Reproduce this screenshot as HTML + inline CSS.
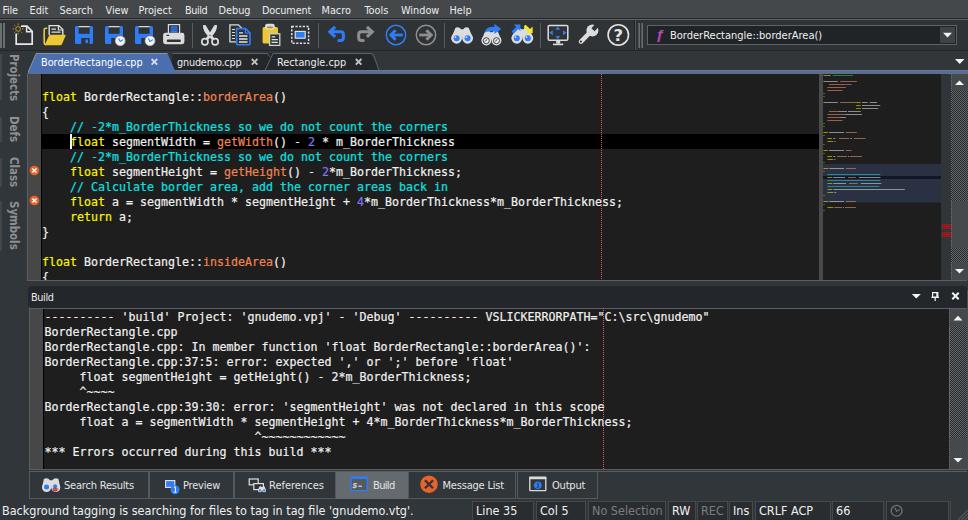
<!DOCTYPE html>
<html lang="en">
<head>
<meta charset="utf-8">
<title>SlickEdit - BorderRectangle.cpp</title>
<style>
*{box-sizing:border-box;margin:0;padding:0}
html,body{width:968px;height:520px;overflow:hidden;background:#31363a}
body{position:relative;font-family:"DejaVu Sans Condensed","DejaVu Sans","Liberation Sans",sans-serif;font-stretch:condensed;font-size:11px;color:#e8e8e8}
.abs{position:absolute}
#menubar{left:0;top:0;width:968px;height:18px;background:#44484b}
#menubar span{position:absolute;top:4px;line-height:14px;font-size:10.8px;margin-left:-0.5px;color:#ececec;white-space:nowrap}
#menuline{left:0;top:18px;width:968px;height:2px;background:#5c6266;border-top:1px solid #242628}
#toolbar{left:0;top:20px;width:968px;height:31px;background:#2f3336}
#tbline{left:0;top:50px;width:968px;height:1px;background:#232527}
.sep{position:absolute;top:3px;width:1px;height:25px;background:#5a5d60}
.grip{position:absolute;top:3px;width:2px;height:25px;background:#6a6d70}
.ico{position:absolute;top:0;left:0;overflow:visible}
#tabrow{left:0;top:51px;width:968px;height:19px;background:#31363a}
#sidebar{left:0;top:51px;width:28px;height:236px;background:#31363a}
.vt{position:absolute;left:7px;width:14px;writing-mode:vertical-rl;font-weight:bold;font-size:11.4px;color:#8e9092;white-space:nowrap;line-height:14px}
.tabt{font-size:10.8px;line-height:14px;color:#ececec;white-space:nowrap}
.vseg{position:absolute;left:0;width:2px;background:#42464a}
pre,.mono{font-family:"DejaVu Sans Mono","Liberation Mono",monospace;font-size:11.63px;line-height:15px;white-space:pre;-webkit-text-stroke:0.2px;font-stretch:normal}
#editor{left:28px;top:74px;width:792px;height:206px;background:#1e1e1e;overflow:hidden}
#code{position:absolute;left:14px;top:1px;color:#f0f0f0}
.k{color:#fbf400}.f{color:#ee8452}.c{color:#08e2e2}.n{color:#8272ee}
#build{left:30px;top:308.5px;width:919px;height:160.5px;background:#1e1e1e;overflow:hidden}
#bout{position:absolute;left:14.5px;top:1.5px;color:#f0f0f0}
.btab{position:absolute;top:472px;height:26.5px;border:1px solid #55595c;border-top:none;font-size:11px;line-height:26px;color:#e4e4e4;white-space:nowrap;letter-spacing:-0.2px}
.btab b{font-weight:normal;position:absolute;top:1px}
.cell{position:absolute;top:501px;height:19px;background:#2a2d30;border:1px solid #46494c;border-bottom:none;font-size:12.5px;line-height:18px;color:#f0f0f0;padding-left:3px;white-space:nowrap}
.dim{color:#7a7d80}
.chk{background:repeating-conic-gradient(#272a2c 0% 25%,#63686b 0% 50%) 0 0/2px 2px}
</style>
</head>
<body>
<!-- MENU -->
<div id="menubar" class="abs">
<span style="left:3px;letter-spacing:-0.2px">File</span><span style="left:30px">Edit</span><span style="left:60px">Search</span><span style="left:106px">View</span><span style="left:139px">Project</span><span style="left:185.5px;letter-spacing:-0.4px">Build</span><span style="left:219px">Debug</span><span style="left:262.5px;letter-spacing:-0.15px">Document</span><span style="left:322px">Macro</span><span style="left:365px">Tools</span><span style="left:401.5px">Window</span><span style="left:450px">Help</span>
</div>
<div id="menuline" class="abs"></div>
<!-- TOOLBAR -->
<div id="toolbar" class="abs">
<div class="grip" style="left:0"></div><div class="grip" style="left:3px"></div>
<div class="sep" style="left:192px"></div><div class="sep" style="left:318px"></div><div class="sep" style="left:444px"></div><div class="sep" style="left:540px"></div>
<svg class="ico" width="968" height="31" viewBox="0 20 968 31">

<!-- new file -->
<path d="M21,26.2 H27 L32.2,31.4 V44.2 H16.2 V33.5" fill="none" stroke="#e6e6e6" stroke-width="1.7" stroke-linejoin="miter"/>
<path d="M26.6,26.2 V31.8 H32.2" fill="none" stroke="#e6e6e6" stroke-width="1.5"/>
<g stroke="#c9a227" stroke-width="0.9" fill="none"><circle cx="18.1" cy="28.9" r="2.4"/><path d="M22.00,28.90 L23.60,28.90 M20.86,31.66 L21.99,32.79 M18.10,32.80 L18.10,34.40 M15.34,31.66 L14.21,32.79 M14.20,28.90 L12.60,28.90 M15.34,26.14 L14.21,25.01 M18.10,25.00 L18.10,23.40 M20.86,26.14 L21.99,25.01"/></g>
<!-- open folder -->
<path d="M49.2,35 V25.6 H58.8 L62.8,29.6 V35" fill="none" stroke="#e0e0e0" stroke-width="1.4"/>
<path d="M58.4,25.6 V30 H62.8" fill="none" stroke="#e0e0e0" stroke-width="1.2"/>
<path d="M51.5,29.2 h4.5 M51.5,32.2 h9" stroke="#e0e0e0" stroke-width="1.3"/>
<path d="M47.2,28.2 H45.8 Q44.2,28.2 44.2,29.8 V43 Q44.2,44.6 45.8,44.6" fill="none" stroke="#eec832" stroke-width="1.6"/>
<path d="M50.6,34.8 H64.8 Q66,34.8 65.5,36 L62,44 Q61.5,45.3 60.2,45.3 H45.5 Q44.5,45.3 45,44.2 L48.8,36 Q49.4,34.8 50.6,34.8 Z" fill="#eec832"/>
<!-- save -->
<g transform="translate(75,26)"><path d="M1.5,0 H16.5 Q18,0 18,1.5 V16.5 Q18,18 16.5,18 H1.5 Q0,18 0,16.5 V1.5 Q0,0 1.5,0 Z" fill="#2f7df6"/><rect x="3.6" y="0" width="11" height="7.8" fill="#2f3336"/><rect x="3.6" y="0" width="11" height="1.3" fill="#d6d6d6"/><rect x="6.2" y="12" width="8.4" height="6" fill="#2f3336"/><rect x="10.4" y="13.5" width="2.6" height="3.6" fill="#2f7df6"/></g>
<g transform="translate(105,26)"><path d="M1.5,0 H16.5 Q18,0 18,1.5 V16.5 Q18,18 16.5,18 H1.5 Q0,18 0,16.5 V1.5 Q0,0 1.5,0 Z" fill="#2f7df6"/><rect x="3.6" y="0" width="11" height="7.8" fill="#2f3336"/><rect x="3.6" y="0" width="11" height="1.3" fill="#d6d6d6"/><rect x="6.2" y="12" width="8.4" height="6" fill="#2f3336"/><rect x="10.4" y="13.5" width="2.6" height="3.6" fill="#2f7df6"/></g><g transform="translate(120.2,40.8)"><circle cx="0" cy="0" r="5.6" fill="#2f3336"/><circle cx="0" cy="0" r="4.9" fill="#f4f4f4" stroke="#b8b8b8" stroke-width="0.8"/><path d="M-1.6,-2.2 L0,0.6 L3,-1.2" fill="none" stroke="#2f7df6" stroke-width="1.1"/></g>
<g transform="translate(135,26)"><path d="M1.5,0 H16.5 Q18,0 18,1.5 V16.5 Q18,18 16.5,18 H1.5 Q0,18 0,16.5 V1.5 Q0,0 1.5,0 Z" fill="#2f7df6"/><rect x="3.6" y="0" width="11" height="7.8" fill="#2f3336"/><rect x="3.6" y="0" width="11" height="1.3" fill="#d6d6d6"/><rect x="6.2" y="12" width="8.4" height="6" fill="#2f3336"/><rect x="10.4" y="13.5" width="2.6" height="3.6" fill="#2f7df6"/></g><g transform="translate(150,40.8)"><circle cx="0" cy="0" r="5.6" fill="#2f3336"/><circle cx="0" cy="0" r="4.9" fill="#f4f4f4" stroke="#b8b8b8" stroke-width="0.8"/><path d="M-1.6,-2.2 L0,0.6 L3,-1.2" fill="none" stroke="#2f7df6" stroke-width="1.1"/></g>
<!-- printer -->
<rect x="168.4" y="24.6" width="11.2" height="9" fill="#2f3336" stroke="#dcdcdc" stroke-width="1.2"/>
<rect x="170.6" y="26.4" width="6.8" height="6" fill="#2f7df6"/>
<path d="M170.6,28.2 h6.8 M170.6,30.2 h6.8" stroke="#2f3336" stroke-width="0.6"/>
<path d="M165.5,32.8 H182 Q184.4,32.8 184.4,35.2 V41.8 Q184.4,44.2 182,44.2 H165.5 Q163.1,44.2 163.1,41.8 V35.2 Q163.1,32.8 165.5,32.8 Z" fill="#dcdcdc"/>
<rect x="166.8" y="39.6" width="14" height="2.4" rx="0.8" fill="#2f3336"/>
<rect x="166.5" y="34.8" width="2.6" height="1.2" fill="#2f3336"/>
<!-- scissors -->
<g fill="none" stroke="#dcdcdc">
<circle cx="204.9" cy="41.7" r="3.1" stroke-width="1.7"/>
<circle cx="215.1" cy="41.7" r="3.1" stroke-width="1.7"/>
</g>
<path d="M202.9,25.2 L205.5,25 Q208.8,30.4 211.2,34.2 L214.6,38.8 L212.6,40.2 L207.8,36 Q202.9,30.8 202.9,25.2 Z" fill="#dcdcdc"/>
<path d="M217.1,25.2 L214.5,25 Q211.2,30.4 208.8,34.2 L205.4,38.8 L207.4,40.2 L212.2,36 Q217.1,30.8 217.1,25.2 Z" fill="#dcdcdc"/>
<circle cx="210" cy="35.4" r="0.6" fill="#2f3336"/>
<!-- copy -->
<path d="M229.9,24.9 H238.4 L241.6,28 V41.8 H229.9 Z" fill="none" stroke="#dcdcdc" stroke-width="1.3"/>
<path d="M232,29.5 h3 M232,32.5 h3 M232,35.5 h3 M232,38.5 h3" stroke="#dcdcdc" stroke-width="1.2"/>
<path d="M236.6,28.6 H245.6 L250,33 V43.6 Q250,44.8 248.8,44.8 H237.8 Q236.6,44.8 236.6,43.6 Z" fill="#2f3336" stroke="#2f7df6" stroke-width="1.6"/>
<path d="M245.4,28.6 V33.2 H250" fill="none" stroke="#2f7df6" stroke-width="1.3"/>
<path d="M239,32.8 h4 M239,36 h8.5 M239,39 h8.5 M239,42 h8.5" stroke="#e6e6e6" stroke-width="1.3"/>
<!-- paste -->
<rect x="262.6" y="27" width="15.4" height="16.6" rx="1.6" fill="#eec832"/>
<rect x="265" y="23.8" width="9.8" height="5.6" rx="2.4" fill="#dcdcdc"/>
<rect x="267" y="26.4" width="5.8" height="1.8" rx="0.6" fill="#a08a3a"/>
<rect x="269.6" y="33.8" width="10.2" height="11.6" fill="#2f3336" stroke="#d0d0d0" stroke-width="1.3"/>
<path d="M271.6,36.8 h3.6 M271.6,39.6 h6.2 M271.6,42.4 h6.2" stroke="#e6e6e6" stroke-width="1.3"/>
<!-- select -->
<rect x="291.8" y="26.4" width="16.8" height="16.8" fill="none" stroke="#e0e0e0" stroke-width="1.5" stroke-dasharray="2.2,1.45"/>
<rect x="295.2" y="31.4" width="10" height="6.8" fill="#2f7df6" stroke="#e6e6e6" stroke-width="1.1"/>
<!-- undo -->
<path d="M335.2,26.8 L329.8,31.8 L335.2,36.8" fill="none" stroke="#2f7df6" stroke-width="3.1" stroke-linejoin="miter"/>
<path d="M331,31.8 H340.6 Q343.4,31.8 343.4,34.6 V37.8 Q343.4,40.6 340.6,40.6 H338.8" fill="none" stroke="#2f7df6" stroke-width="3" stroke-linecap="round"/>
<!-- redo -->
<path d="M366.9,26.8 L372.3,31.8 L366.9,36.8" fill="none" stroke="#8e8e8e" stroke-width="3.1" stroke-linejoin="miter"/>
<path d="M371.1,31.8 H361.5 Q358.7,31.8 358.7,34.6 V37.8 Q358.7,40.6 361.5,40.6 H363.3" fill="none" stroke="#8e8e8e" stroke-width="3" stroke-linecap="round"/>
<!-- back -->
<circle cx="396" cy="35" r="9.7" fill="none" stroke="#2f7df6" stroke-width="1.5"/>
<path d="M395.6,30.2 L390.8,35 L395.6,39.8" fill="none" stroke="#2f7df6" stroke-width="3" stroke-linejoin="miter"/><rect x="392" y="33.6" width="10.8" height="2.8" fill="#2f7df6"/>
<!-- forward -->
<circle cx="426" cy="35" r="9.7" fill="none" stroke="#8e8e8e" stroke-width="1.5"/>
<path d="M426.4,30.2 L431.2,35 L426.4,39.8" fill="none" stroke="#8e8e8e" stroke-width="3" stroke-linejoin="miter"/><rect x="419.2" y="33.6" width="10.8" height="2.8" fill="#8e8e8e"/>
<!-- binoculars 1 -->
<g transform="translate(451.2,27)"><path d="M4.2,0.9 Q6.2,-0.4 8.4,0.8 L9.8,2.2 H12 L13.4,0.8 Q15.6,-0.4 17.6,0.9 L21.5,10.5 H0.3 Z" fill="#dcdcdc"/><circle cx="5.4" cy="11.3" r="5.4" fill="#dcdcdc"/><circle cx="16.4" cy="11.3" r="5.4" fill="#dcdcdc"/></g>
<circle cx="456.6" cy="38.3" r="3" fill="#2f7df6"/><circle cx="467.6" cy="38.3" r="3" fill="#2f7df6"/>
<circle cx="455.4" cy="37.2" r="0.9" fill="#dcdcdc"/><circle cx="466.4" cy="37.2" r="0.9" fill="#dcdcdc"/>
<!-- binoculars 2 -->
<g transform="translate(481.4,30.2) scale(0.92)"><path d="M4.2,0.9 Q6.2,-0.4 8.4,0.8 L9.8,2.2 H12 L13.4,0.8 Q15.6,-0.4 17.6,0.9 L21.5,10.5 H0.3 Z" fill="#dcdcdc"/><circle cx="5.4" cy="11.3" r="5.4" fill="#dcdcdc"/><circle cx="16.4" cy="11.3" r="5.4" fill="#dcdcdc"/></g>
<circle cx="486.3" cy="40.7" r="3" fill="#f0f0f0" stroke="#3a3d40" stroke-width="1"/><circle cx="496.5" cy="40.7" r="3" fill="#f0f0f0" stroke="#3a3d40" stroke-width="1"/>
<path d="M486.3,40.7 l-1.6,0.4 M486.3,40.7 l0.6,-1.6 M496.5,40.7 l-1.6,0.4 M496.5,40.7 l0.6,-1.6" stroke="#3a3d40" stroke-width="0.8"/>
<path d="M484.8,32.6 Q485.6,26.8 493.4,26.8 H494.4 V23.8 L501.2,28.9 L494.4,34 V31.2 H493.4 Q488.2,31 484.8,32.6 Z" fill="#2f7df6"/>
<!-- binoculars 3 -->
<g transform="translate(511.4,27)"><path d="M4.2,0.9 Q6.2,-0.4 8.4,0.8 L9.8,2.2 H12 L13.4,0.8 Q15.6,-0.4 17.6,0.9 L21.5,10.5 H0.3 Z" fill="#dcdcdc"/><circle cx="5.4" cy="11.3" r="5.4" fill="#dcdcdc"/><circle cx="16.4" cy="11.3" r="5.4" fill="#dcdcdc"/></g>
<circle cx="516.8" cy="38.3" r="3" fill="#2f7df6"/><circle cx="527.8" cy="38.3" r="3" fill="#2f7df6"/>
<circle cx="515.6" cy="37.2" r="0.9" fill="#dcdcdc"/><circle cx="526.6" cy="37.2" r="0.9" fill="#dcdcdc"/>
<path d="M512.6,32.6 L518,27.2" stroke="#2f7df6" stroke-width="3"/><path d="M513.8,24.6 H520.4 V31.2 Z" fill="#2f7df6"/>
<path d="M524.6,25.8 L530,31.2" stroke="#f4ec22" stroke-width="3"/><path d="M532.6,26.6 V33.2 H526 Z" fill="#f4ec22"/>
<!-- monitor -->
<rect x="548.2" y="25.4" width="19.6" height="14.8" rx="1.2" fill="none" stroke="#dcdcdc" stroke-width="1.5"/>
<rect x="556.2" y="40.8" width="4" height="2.8" fill="#dcdcdc"/>
<rect x="553" y="43.6" width="10.2" height="1.6" fill="#dcdcdc"/>
<path d="M557.8,26.4 l2.4,3.3 h-4.8 z M557.8,39.2 l2.4,-3.3 h-4.8 z M549.2,32.7 l3.6,-2.5 v5 z M566.6,32.7 l-3.6,-2.5 v5 z" fill="#2f7df6"/>
<!-- wrench -->
<path d="M581,41.6 L590.4,32" stroke="#dcdcdc" stroke-width="4.6" stroke-linecap="round"/>
<circle cx="592.4" cy="30.4" r="6" fill="#dcdcdc"/>
<path d="M593,29.8 L599.4,22.8" stroke="#2f3336" stroke-width="4.4"/>
<circle cx="580.9" cy="41.6" r="1.1" fill="#2f3336"/>
<!-- help -->
<circle cx="618.3" cy="34.9" r="10.2" fill="none" stroke="#e4e4e4" stroke-width="1.6"/>
<text x="618.3" y="41.4" text-anchor="middle" font-family="DejaVu Sans,Liberation Sans,sans-serif" font-stretch="normal" style="font-stretch:normal" font-weight="bold" font-size="16.5" fill="#e4e4e4">?</text>
<!-- toolbar 2 -->
<rect x="634" y="20" width="1" height="31" fill="#232527"/>
<rect x="635" y="20" width="1" height="31" fill="#50545a"/>
<rect x="638.4" y="23" width="1.6" height="25" fill="#6a6d70"/><rect x="641.4" y="23" width="1.6" height="25" fill="#6a6d70"/>
<rect x="647.5" y="25.5" width="309" height="19" fill="#212427" stroke="#5c6266" stroke-width="1"/>
<rect x="940" y="27" width="15" height="16" fill="#3f4346"/>
<path d="M943,32.8 h9 l-4.5,4.6 z" fill="#f4f4f4"/>
<text transform="translate(655.6,38.5) scale(1.3,1)" font-family="Liberation Sans,sans-serif" font-style="italic" font-weight="bold" font-size="12" fill="#b548b8">ƒ</text>
<text x="670" y="38.6" font-family="DejaVu Sans Condensed,DejaVu Sans,Liberation Sans,sans-serif" font-size="11" fill="#f0f0f0">BorderRectangle::borderArea()</text>
</svg>

</div>
<div id="tbline" class="abs"></div>
<!-- TAB ROW -->
<div id="tabrow" class="abs"></div>
<svg class="abs" style="left:0;top:0" width="968" height="80" viewBox="0 0 968 80">
<!-- inactive tabs -->
<path d="M170.5,70.5 L173,53.5 H371 L379,70.5 Z" fill="#24272a"/>
<path d="M172.5,53.5 H267.5 L269.8,56.8 M265,70.5 L273,53.5 H371 Q373,53.5 374,56 L379,70.5" fill="none" stroke="#5e6266" stroke-width="1"/>
<!-- line under tabs -->
<rect x="28" y="70" width="940" height="1" fill="#74787c"/>
<rect x="28" y="71" width="940" height="2.2" fill="#4b6eaf"/>
<rect x="28" y="73" width="940" height="1" fill="#6a6c6e"/>
<!-- active tab -->
<path d="M27.5,73.2 L36.2,53.5 H167.5 L175.2,71 V73.2 Z" fill="#4b6eaf"/>
<path d="M27.8,73 L36.2,53.5 H167.5" fill="none" stroke="#8a93a3" stroke-width="1"/>
<!-- close x -->
<g stroke-width="1.8" fill="none">
<path d="M151.6,59 l5.6,5.6 m0,-5.6 l-5.6,5.6" stroke="#d5dbe8"/>
<path d="M251.8,59 l5.6,5.6 m0,-5.6 l-5.6,5.6" stroke="#c4c4c4"/>
<path d="M355.8,59 l5.6,5.6 m0,-5.6 l-5.6,5.6" stroke="#c4c4c4"/>
</g>
<!-- dropdown triangle -->
<path d="M955,59 h9.5 l-4.75,5 z" fill="#f4f4f4"/>
</svg>
<div class="abs tabt" style="left:41px;top:56px;color:#fff">BorderRectangle.cpp</div>
<div class="abs tabt" style="left:177px;top:56px;letter-spacing:-0.2px">gnudemo.cpp</div>
<div class="abs tabt" style="left:277px;top:56px">Rectangle.cpp</div>

<!-- SIDEBAR -->
<div id="sidebar" class="abs">
<div class="vseg" style="top:3px;height:46px"></div><div class="vseg" style="top:66px;height:25px"></div><div class="vseg" style="top:107px;height:29px"></div><div class="vseg" style="top:150px;height:50px"></div>
<div class="vt" style="top:3px">Projects</div>
<div class="vt" style="top:65px">Defs</div>
<div class="vt" style="top:106px">Class</div>
<div class="vt" style="top:150px">Symbols</div>
</div>
<!-- EDITOR -->
<div id="editor" class="abs">
<div class="abs" style="left:0;top:0;width:13px;height:206px;background:#474747"></div>
<div class="abs" style="left:13px;top:0;width:1px;height:206px;background:#000"></div>
<div class="abs" style="left:13px;top:60px;width:779px;height:15px;background:#000"></div>
<div class="abs" style="left:42px;top:60px;width:2px;height:15px;background:#f4f4f4"></div>
<svg class="abs" style="left:0;top:90px" width="14" height="45" viewBox="0 0 14 45"><circle cx="6.4" cy="6.5" r="4.8" fill="#e8632c"/><path d="M4.3,4.4 l4.2,4.2 m0,-4.2 l-4.2,4.2" stroke="#fff" stroke-width="1.4"/><circle cx="6.4" cy="36.5" r="4.8" fill="#e8632c"/><path d="M4.3,34.4 l4.2,4.2 m0,-4.2 l-4.2,4.2" stroke="#fff" stroke-width="1.4"/></svg>
<pre id="code">

<span class="k">float</span> BorderRectangle::<span class="f">borderArea</span>()
{
    <span class="c">// -2*m_BorderThickness so we do not count the corners</span>
    <span class="k">float</span> segmentWidth = <span class="f">getWidth</span>() - <span class="n">2</span> * m_BorderThickness
    <span class="c">// -2*m_BorderThickness so we do not count the corners</span>
    <span class="k">float</span> segmentHeight = <span class="f">getHeight</span>() - <span class="n">2</span>*m_BorderThickness;
    <span class="c">// Calculate border area, add the corner areas back in</span>
    <span class="k">float</span> a = segmentWidth * segmentHeight + <span class="n">4</span>*m_BorderThickness*m_BorderThickness;
    <span class="k">return</span> a;
}

<span class="k">float</span> BorderRectangle::<span class="f">insideArea</span>()
{</pre>
</div>
<div class="abs chk" style="left:951px;top:74px;width:17px;height:206px"></div>
<svg class="abs" style="left:0;top:0" width="968" height="290" viewBox="0 0 968 290">
<!-- red margin line -->
<path d="M601.5,74 V280" stroke="#d46060" stroke-width="1" stroke-dasharray="1,1"/>
<!-- minimap -->
<rect x="819" y="74" width="4" height="206" fill="#4a4a4a"/>
<rect x="823" y="74" width="118" height="206" fill="#1e1e1e"/>
<rect x="823" y="164" width="118" height="38.5" fill="#2a3142"/>
<rect x="823" y="176" width="118" height="3" fill="#121726"/>
<g opacity="0.65">
<rect x="823.5" y="75.0" width="7.3" height="1" fill="#d0d000"/>
<rect x="832.7" y="75.0" width="20.2" height="1" fill="#20c030"/>
<rect x="823.5" y="81.0" width="14.3" height="1" fill="#c8c8c8"/>
<rect x="840.2" y="81.0" width="16.7" height="1" fill="#d8875a"/>
<rect x="829.0" y="84.0" width="15.7" height="1" fill="#d8875a"/>
<rect x="844.7" y="84.0" width="7.0" height="1" fill="#9a80d0"/>
<rect x="827.4" y="87.0" width="18.4" height="1" fill="#d8875a"/>
<rect x="827.4" y="90.0" width="15.0" height="1" fill="#d8875a"/>
<rect x="823.5" y="93.0" width="1.0" height="1" fill="#d0d000"/>
<rect x="823.5" y="96.0" width="1.0" height="1" fill="#d0d000"/>
<rect x="823.5" y="102.0" width="14.3" height="1" fill="#c8c8c8"/>
<rect x="840.2" y="102.0" width="16.1" height="1" fill="#d8875a"/>
<rect x="856.2" y="102.0" width="4.5" height="1" fill="#d0d000"/>
<rect x="862.0" y="102.0" width="5.6" height="1" fill="#c8c8c8"/>
<rect x="869.6" y="102.0" width="7.4" height="1" fill="#c8c8c8"/>
<rect x="856.2" y="105.0" width="4.5" height="1" fill="#d0d000"/>
<rect x="862.0" y="105.0" width="18.3" height="1" fill="#c8c8c8"/>
<rect x="856.2" y="108.0" width="4.5" height="1" fill="#d0d000"/>
<rect x="862.0" y="108.0" width="16.2" height="1" fill="#c8c8c8"/>
<rect x="829.0" y="111.0" width="10.0" height="1" fill="#d8875a"/>
<rect x="839.0" y="111.0" width="8.0" height="1" fill="#c8c8c8"/>
<rect x="848.0" y="111.0" width="12.7" height="1" fill="#c8c8c8"/>
<rect x="827.4" y="114.0" width="17.2" height="1" fill="#d8875a"/>
<rect x="844.7" y="114.0" width="17.3" height="1" fill="#c8c8c8"/>
<rect x="827.4" y="117.0" width="12.7" height="1" fill="#d8875a"/>
<rect x="840.2" y="117.0" width="5.7" height="1" fill="#c8c8c8"/>
<rect x="827.4" y="120.0" width="15.0" height="1" fill="#d8875a"/>
<rect x="823.5" y="123.0" width="1.0" height="1" fill="#d0d000"/>
<rect x="823.5" y="126.0" width="1.0" height="1" fill="#d0d000"/>
<rect x="823.5" y="132.0" width="4.4" height="1" fill="#d0d000"/>
<rect x="829.0" y="132.0" width="15.1" height="1" fill="#c8c8c8"/>
<rect x="845.8" y="132.0" width="11.0" height="1" fill="#d8875a"/>
<rect x="823.5" y="135.0" width="1.0" height="1" fill="#d0d000"/>
<rect x="827.4" y="138.0" width="4.6" height="1" fill="#d0d000"/>
<rect x="833.3" y="138.0" width="2.0" height="1" fill="#c8c8c8"/>
<rect x="839.0" y="138.0" width="10.4" height="1" fill="#d8875a"/>
<rect x="850.4" y="138.0" width="1.6" height="1" fill="#c8c8c8"/>
<rect x="853.9" y="138.0" width="11.6" height="1" fill="#d8875a"/>
<rect x="827.4" y="141.0" width="5.8" height="1" fill="#d0d000"/>
<rect x="834.3" y="141.0" width="1.2" height="1" fill="#c8c8c8"/>
<rect x="823.5" y="144.0" width="1.0" height="1" fill="#d0d000"/>
<rect x="823.5" y="150.0" width="4.4" height="1" fill="#d0d000"/>
<rect x="829.0" y="150.0" width="15.1" height="1" fill="#c8c8c8"/>
<rect x="845.8" y="150.0" width="5.8" height="1" fill="#d8875a"/>
<rect x="823.5" y="153.0" width="1.0" height="1" fill="#d0d000"/>
<rect x="827.4" y="156.0" width="4.6" height="1" fill="#d0d000"/>
<rect x="833.3" y="156.0" width="2.0" height="1" fill="#c8c8c8"/>
<rect x="837.2" y="156.0" width="9.8" height="1" fill="#d8875a"/>
<rect x="848.0" y="156.0" width="1.0" height="1" fill="#c8c8c8"/>
<rect x="849.8" y="156.0" width="12.2" height="1" fill="#d8875a"/>
<rect x="827.4" y="159.0" width="5.8" height="1" fill="#d0d000"/>
<rect x="834.3" y="159.0" width="1.2" height="1" fill="#c8c8c8"/>
<rect x="823.5" y="162.0" width="1.0" height="1" fill="#d0d000"/>
<rect x="823.5" y="168.0" width="4.9" height="1" fill="#d0d000"/>
<rect x="829.4" y="168.0" width="14.7" height="1" fill="#c8c8c8"/>
<rect x="846.0" y="168.0" width="9.8" height="1" fill="#d8875a"/>
<rect x="823.5" y="171.0" width="1.0" height="1" fill="#d0d000"/>
<rect x="827.4" y="174.0" width="52.9" height="1" fill="#1fb8c8"/>
<rect x="827.4" y="177.0" width="4.9" height="1" fill="#d0d000"/>
<rect x="833.3" y="177.0" width="11.8" height="1" fill="#c8c8c8"/>
<rect x="848.0" y="177.0" width="7.8" height="1" fill="#d8875a"/>
<rect x="858.8" y="177.0" width="21.6" height="1" fill="#c8c8c8"/>
<rect x="827.4" y="180.0" width="52.9" height="1" fill="#1fb8c8"/>
<rect x="827.4" y="183.0" width="4.9" height="1" fill="#d0d000"/>
<rect x="833.3" y="183.0" width="12.7" height="1" fill="#c8c8c8"/>
<rect x="849.0" y="183.0" width="8.8" height="1" fill="#d8875a"/>
<rect x="860.7" y="183.0" width="20.6" height="1" fill="#c8c8c8"/>
<rect x="827.4" y="186.0" width="51.9" height="1" fill="#1fb8c8"/>
<rect x="827.4" y="189.0" width="4.9" height="1" fill="#d0d000"/>
<rect x="833.3" y="189.0" width="71.5" height="1" fill="#c8c8c8"/>
<rect x="827.4" y="192.0" width="5.9" height="1" fill="#d0d000"/>
<rect x="834.3" y="192.0" width="2.0" height="1" fill="#c8c8c8"/>
<rect x="823.5" y="195.0" width="1.0" height="1" fill="#d0d000"/>
<rect x="823.5" y="201.0" width="4.9" height="1" fill="#d0d000"/>
<rect x="829.4" y="201.0" width="14.7" height="1" fill="#c8c8c8"/>
<rect x="846.0" y="201.0" width="9.8" height="1" fill="#d8875a"/>
<rect x="823.5" y="204.0" width="1.0" height="1" fill="#d0d000"/>
<rect x="827.4" y="207.0" width="5.9" height="1" fill="#d0d000"/>
<rect x="834.3" y="207.0" width="7.8" height="1" fill="#d8875a"/>
<rect x="843.1" y="207.0" width="1.0" height="1" fill="#c8c8c8"/>
<rect x="845.1" y="207.0" width="10.8" height="1" fill="#d8875a"/>
<rect x="823.5" y="210.0" width="1.0" height="1" fill="#d0d000"/>
</g>
<!-- marker strip -->
<rect x="941" y="74" width="10" height="206" fill="#30353a"/>
<rect x="942" y="224" width="9" height="5" fill="#921c1c"/>
<rect x="942" y="232" width="9" height="5" fill="#921c1c"/>
<!-- scrollbar -->
<rect x="951" y="74" width="17" height="16.5" fill="#45494b"/>
<path d="M955,85 h9 l-4.5,-4.6 z" fill="#f4f4f4"/>
<rect x="951" y="201" width="17" height="47" fill="#45494b"/>
<rect x="951" y="262.5" width="17" height="17.5" fill="#45494b"/>
<path d="M955,269 h9 l-4.5,4.6 z" fill="#f4f4f4"/>
<path d="M951.5,74 V280" stroke="#686c6f" stroke-width="1" stroke-dasharray="1,1"/>
<!-- editor bottom border -->
<rect x="28" y="280" width="939" height="1" fill="#5a5e61"/>
<rect x="27" y="73" width="1" height="208" fill="#5a5e61"/>
</svg>

<!-- BUILD PANEL -->
<div class="abs" style="left:28px;top:286px;width:939px;height:22px;background:#23262a;border-radius:4px 4px 0 0"></div>
<div class="abs" style="left:29px;top:307.5px;width:938px;height:1px;background:#5a5e61"></div>
<div class="abs" style="left:31px;top:291px;font-size:10.8px;letter-spacing:-0.35px;line-height:14px;color:#ececec">Build</div>
<div id="build" class="abs">
<div class="abs" style="left:0;top:0;width:13px;height:161px;background:#474747"></div>
<div class="abs" style="left:13px;top:0;width:1px;height:161px;background:#000"></div>
<pre id="bout">---------- 'build' Project: 'gnudemo.vpj' - 'Debug' ---------- VSLICKERRORPATH="C:\src\gnudemo"
BorderRectangle.cpp
BorderRectangle.cpp: In member function 'float BorderRectangle::borderArea()':
BorderRectangle.cpp:37:5: error: expected ',' or ';' before 'float'
     float segmentHeight = getHeight() - 2*m_BorderThickness;
     ^~~~~
BorderRectangle.cpp:39:30: error: 'segmentHeight' was not declared in this scope
     float a = segmentWidth * segmentHeight + 4*m_BorderThickness*m_BorderThickness;
                              ^~~~~~~~~~~~~
*** Errors occurred during this build ***</pre>
</div>
<div class="abs chk" style="left:949px;top:309px;width:18px;height:160px"></div>
<svg class="abs" style="left:0;top:280px" width="968" height="240" viewBox="0 280 968 240">
<!-- header icons -->
<path d="M911.8,294 h9 l-4.5,4.6 z" fill="#f4f4f4"/>
<path d="M932.6,292.6 h5.2 v4.6 h-5.2 z M931.4,297.4 h7.6 M935.2,297.4 v3.6 M936.9,292.6 v4.6" fill="none" stroke="#f4f4f4" stroke-width="1.2"/>
<path d="M952.3,292.8 l6.4,6.4 m0,-6.4 l-6.4,6.4" stroke="#f4f4f4" stroke-width="2" fill="none"/>
<!-- red margin -->
<path d="M603.5,308 V469" stroke="#d46060" stroke-width="1" stroke-dasharray="1,1"/>
<!-- scrollbar -->
<rect x="949" y="309" width="18" height="17" fill="#45494b"/>
<path d="M953.5,320.4 h9 l-4.5,-4.6 z" fill="#f4f4f4"/>
<rect x="949" y="438.5" width="18" height="12" fill="#45494b"/>
<rect x="949" y="451" width="18" height="18" fill="#45494b"/>
<path d="M953.5,458 h9 l-4.5,4.6 z" fill="#f4f4f4"/>
<path d="M949.5,308 V469" stroke="#686c6f" stroke-width="1" stroke-dasharray="1,1"/>
<rect x="29" y="307" width="1" height="163" fill="#5a5e61"/>
<rect x="967" y="290" width="1" height="180" fill="#4a4d50"/>
</svg>

<!-- BOTTOM TABS -->
<div class="abs" style="left:29px;top:469px;width:938px;height:1px;background:#5a5e61"></div>
<div class="abs" style="left:29px;top:471px;width:938px;height:1px;background:#5a5e61"></div>
<div class="btab" style="left:29px;width:120px"><b style="left:34px">Search Results</b></div>
<div class="btab" style="left:149px;width:85px"><b style="left:33px">Preview</b></div>
<div class="btab" style="left:234px;width:102px"><b style="left:34px;letter-spacing:0">References</b></div>
<div class="btab" style="left:336px;width:72px;background:#656a6e;border-color:#656a6e"><b style="left:36px;letter-spacing:-0.65px">Build</b></div>
<div class="btab" style="left:408px;width:108px"><b style="left:33.5px">Message List</b></div>
<div class="btab" style="left:517px;width:81px"><b style="left:34px">Output</b></div>
<!-- STATUS BAR -->
<div class="abs" style="left:2px;top:502px;font-size:12.5px;line-height:18px;color:#f0f0f0;white-space:nowrap">Background tagging is searching for files to tag in tag file 'gnudemo.vtg'.</div>
<div class="cell" style="left:472px;width:62px">Line 35</div>
<div class="cell" style="left:536px;width:50px">Col 5</div>
<div class="cell dim" style="left:588px;width:78px">No Selection</div>
<div class="cell" style="left:668px;width:28px">RW</div>
<div class="cell dim" style="left:697px;width:31px">REC</div>
<div class="cell" style="left:729px;width:24px">Ins</div>
<div class="cell" style="left:755px;width:76px">CRLF ACP</div>
<div class="cell" style="left:832px;width:52px">66</div>
<div class="cell" style="left:886px;width:63px"></div>
<svg class="abs" style="left:0;top:468px" width="968" height="52" viewBox="0 468 968 52">
<!-- search results binoculars -->
<g transform="translate(42,478) scale(0.84)">
<path d="M2.2,1.2 Q4.8,-0.6 7.6,0.8 L9.6,2.6 H12.2 L14.2,0.8 Q17,-0.6 19.6,1.2 L21.6,11 H0.2 Z" fill="#dcdcdc"/>
<circle cx="5.4" cy="11.3" r="5.4" fill="#dcdcdc"/><circle cx="16.4" cy="11.3" r="5.4" fill="#dcdcdc"/>
<circle cx="5.4" cy="10.8" r="3" fill="#2f7df6"/><circle cx="15.6" cy="9.8" r="2.4" fill="#2f7df6"/>
</g>
<ellipse cx="55.2" cy="489.4" rx="2.5" ry="2.2" fill="#d03030"/><path d="M52,489.2 h6.4" stroke="#8a8a8a" stroke-width="0.9"/>
<!-- preview -->
<rect x="165.6" y="480.6" width="9.2" height="6.8" fill="#2f7df6" stroke="#e6e6e6" stroke-width="1.1"/>
<circle cx="175" cy="489.8" r="4.5" fill="#2f7df6"/>
<path d="M174,487.6 h1.5 v4.4 M173.6,492.2 h2.9" stroke="#f0f0f0" stroke-width="1" fill="none"/><circle cx="175" cy="486.6" r="0.7" fill="#f0f0f0"/>
<!-- references -->
<rect x="249.2" y="479" width="9" height="5.8" fill="none" stroke="#e0e0e0" stroke-width="1.2"/>
<rect x="253.8" y="483.6" width="9.6" height="6" fill="#2f3336" stroke="#e0e0e0" stroke-width="1.2"/>
<path d="M258.6,488.2 l1,-2 h1.4 l0.6,0.8 h0.8 l0.6,-0.8 h1.4 l1,2 v2 h-6.8 z" fill="#dcdcdc"/>
<circle cx="259.9" cy="490.4" r="1.9" fill="#dcdcdc"/><circle cx="264.1" cy="490.4" r="1.9" fill="#dcdcdc"/>
<circle cx="259.9" cy="490.4" r="1.1" fill="#2f7df6"/><circle cx="264.1" cy="490.4" r="1.1" fill="#2f7df6"/>
<!-- build -->
<rect x="351" y="477.6" width="16.2" height="13" rx="0.8" fill="#555a5e" stroke="#2f7df6" stroke-width="1.4"/>
<rect x="350.3" y="476.4" width="17.6" height="2.6" rx="0.8" fill="#2f7df6"/>
<text x="352.6" y="488.4" font-family="Liberation Sans,sans-serif" font-weight="bold" font-style="italic" font-size="8" fill="#d8d8d8">$</text>
<rect x="358.4" y="485.6" width="3.6" height="1.2" fill="#d8d8d8"/>
<!-- message list -->
<circle cx="429" cy="484.2" r="8.7" fill="#e8632c"/>
<path d="M425,480.2 l8,8 m0,-8 l-8,8" stroke="#2f3336" stroke-width="2.3" fill="none"/>
<!-- output -->
<rect x="529.8" y="477.6" width="16" height="13" rx="0.6" fill="none" stroke="#dcdcdc" stroke-width="1.3"/>
<rect x="529.2" y="476.4" width="17.2" height="2.8" rx="0.6" fill="#dcdcdc"/>
<circle cx="537.8" cy="485.2" r="3.8" fill="#2f7df6"/>
<path d="M537.1,484.2 h1.2 v2.8 M536.6,487.2 h2.4" stroke="#2f3336" stroke-width="0.9" fill="none"/><circle cx="537.8" cy="483.1" r="0.65" fill="#2f3336"/>
<!-- status clock -->
<circle cx="896.6" cy="510.8" r="5.4" fill="none" stroke="#6f7275" stroke-width="1.3"/>
<path d="M894.6,507.6 L896.6,511.2 L899.6,509.6" fill="none" stroke="#6f7275" stroke-width="1.1"/>
<rect x="950" y="501" width="1" height="19" fill="#46494c"/>
<path d="M958,520 L968,510 M961.5,520 L968,513.5 M965,520 L968,517" stroke="#55585b" stroke-width="1.2"/>
</svg>

</body>
</html>
